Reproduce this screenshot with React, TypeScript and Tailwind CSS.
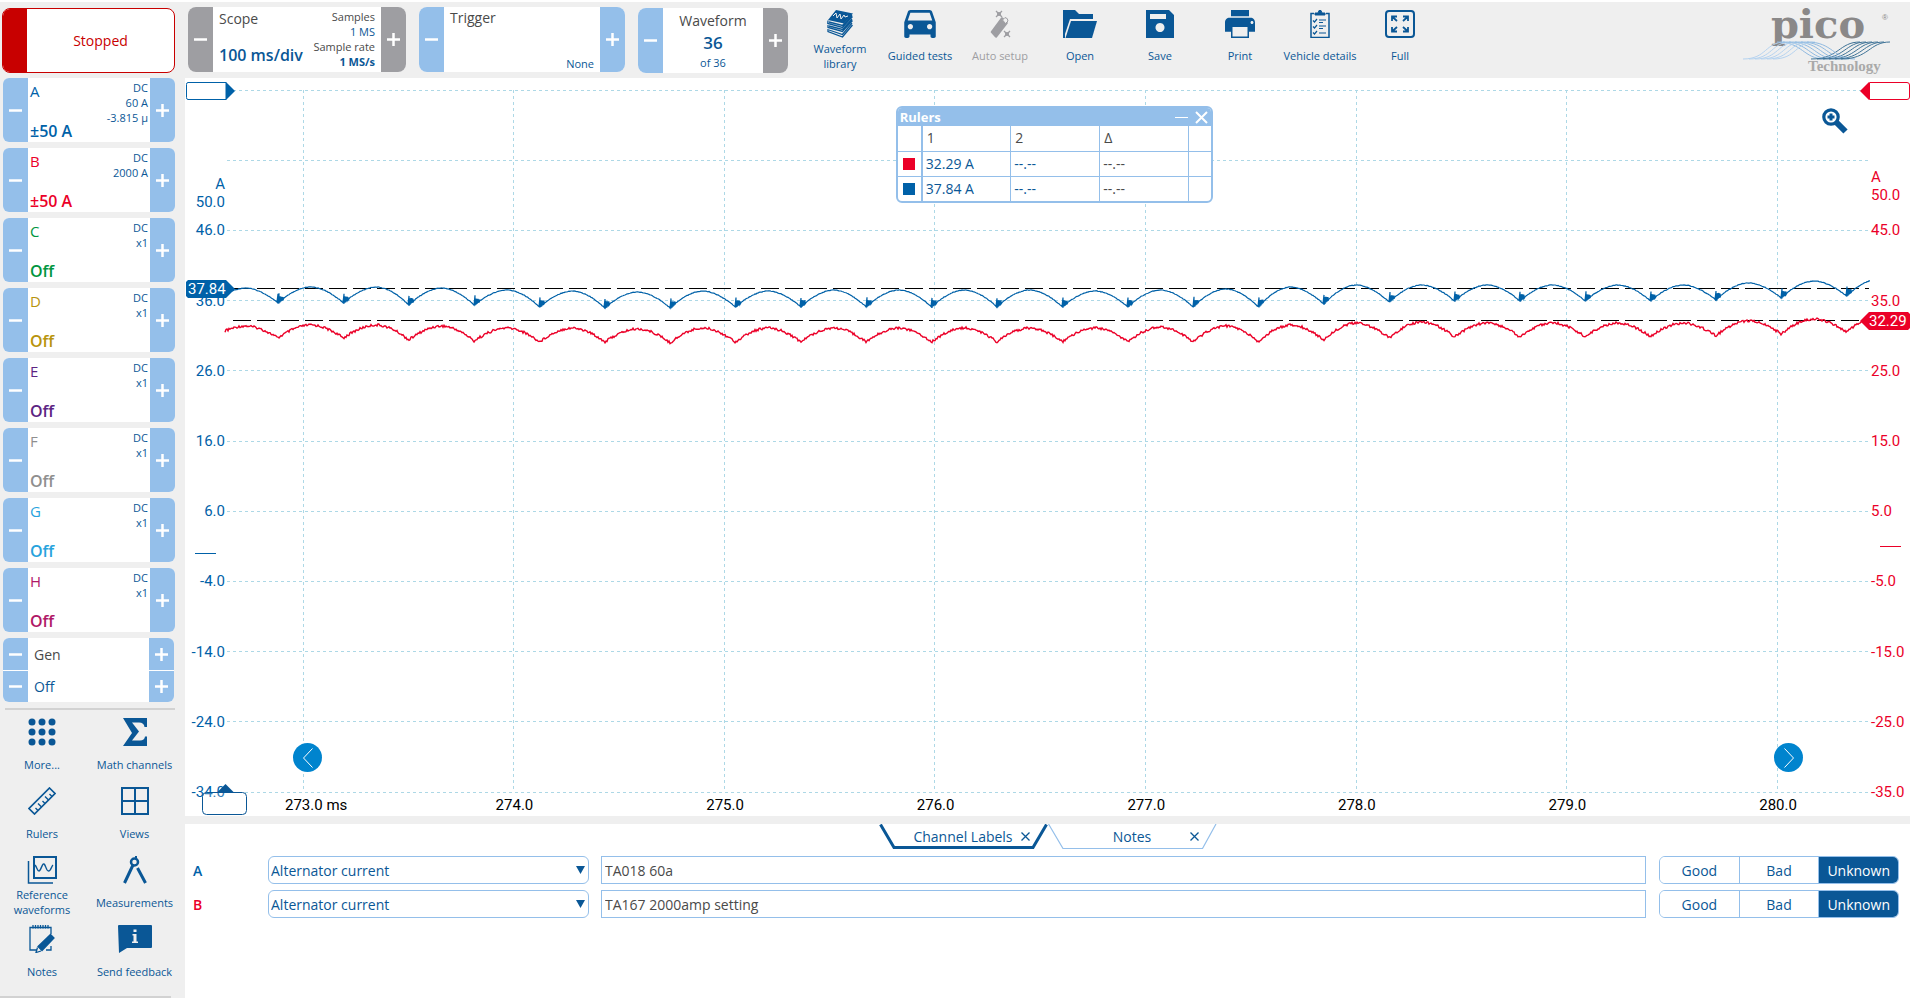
import type { ReactNode } from 'react';
import { useState } from 'react';
import clsx from 'clsx';

interface Channel {
  id: string;
  color: string;
  range: string;
  info: string[];
}

interface Tool {
  label: string;
  icon: ReactNode;
  disabled?: boolean;
}

const channels: Channel[] = [
  { id: 'A', color: 'text-[#0061a8]', range: '±50 A', info: ['DC', '60 A', '-3.815 µ'] },
  { id: 'B', color: 'text-[#eb0028]', range: '±50 A', info: ['DC', '2000 A'] },
  { id: 'C', color: 'text-[#009640]', range: 'Off', info: ['DC', 'x1'] },
  { id: 'D', color: 'text-[#b8940c]', range: 'Off', info: ['DC', 'x1'] },
  { id: 'E', color: 'text-[#5c2483]', range: 'Off', info: ['DC', 'x1'] },
  { id: 'F', color: 'text-[#8f8f8f]', range: 'Off', info: ['DC', 'x1'] },
  { id: 'G', color: 'text-[#27a3dd]', range: 'Off', info: ['DC', 'x1'] },
  { id: 'H', color: 'text-[#b01867]', range: 'Off', info: ['DC', 'x1'] },
];

const BLUE = '#0061a8';
const RED = '#eb0028';
const NAVY = '#0a5796';

/* ---------- icons ---------- */

const LibraryIcon = () => (
  <svg className="h-7 w-[26px]" viewBox="0 0 26 28" fill="none" stroke={NAVY} strokeWidth="1.3">
    <path d="M9 0 26 3.500 17 13.500 1 10z" fill={NAVY} stroke="none" />
    <path d="M6 6l3-3 1 5 3-4 1 5 3-4 1 2 3-1" stroke="#efefef" strokeWidth="1" />
    <path d="M1 10.500 0.800 13.500 15.500 17.500 25.500 6.500M2 12l13.500 3.500L25 5" />
    <path d="M1 15v2.500l14.500 4L25.500 10.500M2 16l13.500 3.500L25 9" />
    <path d="M1 19v2.500l14.500 5.500L25.500 15M2 20l13.500 4.500L25 13" />
  </svg>
);

const CarIcon = () => (
  <svg className="h-7 w-8" viewBox="3 5 18 16" fill={NAVY}>
    <path d="M18.92 6.01C18.72 5.42 18.16 5 17.5 5h-11c-.66 0-1.21.42-1.42 1.01L3 12v8c0 .55.45 1 1 1h1c.55 0 1-.45 1-1v-1h12v1c0 .55.45 1 1 1h1c.55 0 1-.45 1-1v-8l-2.08-5.99zM6.500 16c-.83 0-1.500-.67-1.500-1.500S5.670 13 6.500 13s1.500.67 1.500 1.500S7.330 16 6.500 16zm11 0c-.83 0-1.500-.67-1.500-1.500s.67-1.500 1.500-1.500 1.500.67 1.500 1.500-.67 1.500-1.500 1.500zM5 11l1.500-4.500h11L19 11H5z" />
  </svg>
);

const WandIcon = () => (
  <svg className="h-7 w-6" viewBox="0 0 24 28" fill="none" stroke="#9e9ea2" strokeWidth="1.300">
    <path d="M14 8.500 4 22l4 4.500L18.500 13z" fill="#9e9ea2" stroke="#9e9ea2" strokeWidth="2.500" strokeLinejoin="round" />
    <path d="M14.500 10 17.500 13.500 20 11Q20 8 17 7.500z" fill="#efefef" strokeWidth="1" />
    <path d="M8 1l6 6M14 1 8 7M11 2v4M9 4h4M16 21l6 6M22 21l-6 6M19 22v4M17 24h4" />
  </svg>
);

const FolderIcon = () => (
  <svg className="h-7 w-[34px]" viewBox="0 0 34 28" fill={NAVY}>
    <path d="M0 0h12l4 4h14v5H7L2 24V28H0z" />
    <path d="M8 11h26l-5 17H2.500z" />
  </svg>
);

const SaveIcon = () => (
  <svg className="h-7 w-7" viewBox="0 0 28 28" fill={NAVY} fillRule="evenodd">
    <path d="M0 0h23l5 5v23H0zM4 4v5h16V4zM14 13a4.500 4.500 0 1 0 .01 0z" />
  </svg>
);

const PrintIcon = () => (
  <svg className="h-7 w-[30px]" viewBox="2 3 20 18" preserveAspectRatio="none" fill={NAVY}>
    <path d="M19 8H5c-1.660 0-3 1.340-3 3v6h4v4h12v-4h4v-6c0-1.660-1.340-3-3-3zm-2 12H7v-6h10v6zm3-8c-.55 0-1-.45-1-1s.45-1 1-1 1 .45 1 1-.45 1-1 1zM18 3H6v4h12V3z" />
  </svg>
);

const ClipboardIcon = () => (
  <svg className="h-7 w-5" viewBox="0 0 20 28" fill="none" stroke={NAVY} strokeWidth="1.500">
    <path d="M4 3.500H1v24h18v-24h-3" />
    <path d="M5 5V3h3l1-2.500h2L12 3h3v2z" fill={NAVY} strokeWidth="1" />
    <path d="M9 10h7M9 12.500h4M9 16h7M9 18.500h4M9 23h7" strokeWidth="1.200" />
    <path d="M3 10.500l1.500 1.500L7 9M3 16.500l1.500 1.500L7 15M3 22.500l1.500 1.500L7 21" strokeWidth="1.200" />
  </svg>
);

const FullIcon = () => (
  <svg className="h-7 w-[30px]" viewBox="0 0 30 28" fill="none" stroke={NAVY} strokeWidth="2">
    <rect x="1" y="1" width="28" height="26" rx="3" />
    <path d="M7 11V6.500h5M7 6.500l5 4.500M18 6.500h5V11M23 6.500 18 11M7 17v4.500h5M7 21.500 12 17M18 21.500h5V17M23 21.500 18 17" strokeWidth="1.800" />
  </svg>
);

const MoreIcon = () => (
  <svg className="h-7 w-7" viewBox="0 0 28 28" fill={NAVY}>
    {[4, 14, 24].map((y) => [4, 14, 24].map((x) => <circle key={`${x}-${y}`} cx={x} cy={y} r="3.500" />))}
  </svg>
);

const SigmaIcon = () => (
  <svg className="h-7 w-6" viewBox="0 0 24 28" fill={NAVY}>
    <path d="M0 0h24v9h-2.500Q21 4.500 16 4.500H9l7 9L9 22.500h8Q21.500 22.500 22 18.500h2V28H0l9-13z" />
  </svg>
);

const RulerIcon = () => (
  <svg className="h-7 w-7" viewBox="0 0 28 28" fill="none" stroke={NAVY} strokeWidth="1.700">
    <path d="M21.500 1 27 6.500 6.500 27 1 21.500z" />
    <path d="M24 9.500 21.500 7M20.500 13 17 9.500M17 16.500 14.500 14M13.500 20 10 16.500M10 23.500 7.500 21" strokeWidth="1.400" />
  </svg>
);

const ViewsIcon = () => (
  <svg className="h-7 w-7" viewBox="0 0 28 28" fill="none" stroke={NAVY} strokeWidth="2">
    <path d="M1 1h26v26H1zM14 1v26M1 14h26" />
  </svg>
);

const ReferenceIcon = () => (
  <svg className="h-7 w-[30px]" viewBox="0 0 30 28" fill="none" stroke={NAVY} strokeWidth="2">
    <path d="M7 1h22v21H7z" />
    <path d="M1.500 5v22H26" strokeWidth="1.500" />
    <path d="M8 9c2 2 2 6 4 6s3-8 5-7 2 7 4.500 7 3-5 4.500-6" strokeWidth="1.400" />
  </svg>
);

const MeasureIcon = () => (
  <svg className="h-7 w-6" viewBox="0 0 24 28" fill="none" stroke={NAVY} strokeWidth="2.500">
    <circle cx="11.500" cy="6" r="3.500" />
    <path d="M13 0v3" strokeWidth="2" />
    <path d="M10 9 1.500 27M14.500 12 22.500 27" strokeWidth="3" />
  </svg>
);

const NotesIcon = () => (
  <svg className="h-7 w-7" viewBox="0 0 28 28" fill="none" stroke={NAVY} strokeWidth="1.300">
    <path d="M9 25H2V2.500h21V9M23 21v4h-5" />
    <path d="M5 0v3.500M7.500 0v3.500M10 0v3.500M12.500 0v3.500M15 0v3.500M17.500 0v3.500M20 0v3.500" />
    <path d="M22.500 9.500 26 13 14 25.500 10 21.500z" fill={NAVY} />
    <path d="M9.500 22.500 8 27.500l5-1.500" />
  </svg>
);

const FeedbackIcon = () => (
  <svg className="h-7 w-[34px]" viewBox="0 0 34 28" fill={NAVY}>
    <path d="M0 1Q0 0 1 0h32q1 0 1 1v21q0 1-1 1H9L1 28z" />
    <path d="M15.500 4.500h3v2.500h-3zM14.500 9h4v7.500h1.500V18h-6v-1.500h1.500v-6h-1z" fill="#efefef" />
  </svg>
);

const toolbar: Tool[] = [
  { label: 'Waveform library', icon: <LibraryIcon /> },
  { label: 'Guided tests', icon: <CarIcon /> },
  { label: 'Auto setup', icon: <WandIcon />, disabled: true },
  { label: 'Open', icon: <FolderIcon /> },
  { label: 'Save', icon: <SaveIcon /> },
  { label: 'Print', icon: <PrintIcon /> },
  { label: 'Vehicle details', icon: <ClipboardIcon /> },
  { label: 'Full', icon: <FullIcon /> },
];

const sideTools: Tool[] = [
  { label: 'More...', icon: <MoreIcon /> },
  { label: 'Math channels', icon: <SigmaIcon /> },
  { label: 'Rulers', icon: <RulerIcon /> },
  { label: 'Views', icon: <ViewsIcon /> },
  { label: 'Reference waveforms', icon: <ReferenceIcon /> },
  { label: 'Measurements', icon: <MeasureIcon /> },
  { label: 'Notes', icon: <NotesIcon /> },
  { label: 'Send feedback', icon: <FeedbackIcon /> },
];

/* ---------- small controls ---------- */

function StepButton({ kind, label, gray }: { kind: 'minus' | 'plus'; label: string; gray?: boolean }) {
  return (
    <button
      type="button"
      aria-label={label}
      className={clsx('flex w-[25px] shrink-0 items-center justify-center', gray ? 'bg-[#9e9ea2]' : 'bg-[#94bfea]')}
    >
      <svg className="h-[13px] w-[13px]" viewBox="0 0 13 13" stroke="#fff" strokeWidth="2.500">
        <path d={kind === 'plus' ? 'M0 6.500h13M6.500 0v13' : 'M0 6.500h13'} />
      </svg>
    </button>
  );
}

function ChannelCard({ channel }: { channel: Channel }) {
  return (
    <div className="flex h-16 w-[172px] overflow-hidden rounded-md bg-white">
      <StepButton kind="minus" label={`Channel ${channel.id} range down`} />
      <div className="flex flex-1 justify-between pl-[2px] pr-[2px]">
        <div className={clsx('flex flex-col justify-between', channel.color)}>
          <span className="text-[15px] leading-[26px]">{channel.id}</span>
          <span className="text-[16px] font-semibold leading-[22px]">{channel.range}</span>
        </div>
        <div className="pt-[2px] text-right text-[11px] leading-[15px] text-[#0a5796]">
          {channel.info.map((line) => (
            <div key={line}>{line}</div>
          ))}
        </div>
      </div>
      <StepButton kind="plus" label={`Channel ${channel.id} range up`} />
    </div>
  );
}

function Logo() {
  return (
    <svg className="h-[72px] w-[160px] overflow-visible" viewBox="0 0 160 72" role="img" aria-label="pico Technology">
      <text x="78" y="36" textAnchor="middle" fill="#8a8888" fontSize="40" fontFamily="DejaVu Serif, serif" fontWeight="bold">
        pico
      </text>
      <text x="142" y="18" fill="#8a8888" fontSize="8" fontFamily="Liberation Sans, sans-serif">
        ®
      </text>
      <g fill="none" strokeWidth="1">
        {[0, 6, 12, 18, 24, 30].map((o) => (
          <g key={o}>
            <path d={`M${o + 3} 57C${o + 27} 57 ${o + 25} 40 ${o + 45} 40`} stroke="#b5d3ef" />
            <path d={`M${o + 37} 40C${o + 63} 40 ${o + 63} 57 ${o + 85} 57`} stroke="#8fb9e0" />
            <path d={`M${o + 71} 57C${o + 99} 57 ${o + 99} 40 ${o + 120} 40`} stroke="#3f7397" />
          </g>
        ))}
      </g>
      <text x="68" y="69" fill="#a9a9a9" fontSize="15" fontFamily="Liberation Serif, serif" fontWeight="bold">
        Technology
      </text>
    </svg>
  );
}

/* ---------- scope view ---------- */

// The trace layer is drawn in a 1642 x 702 space and stretched to the plot.
const VIEW_W = 1642;
const VIEW_H = 702;
const RIPPLE = 65.36;
const FIRST_DIP = 51;

const blueDips = [213, 213, 215, 215, 217, 218, 218, 217, 217, 217, 217, 217, 217, 217, 217, 217, 214, 212, 211, 211, 211, 211, 210, 208, 206, 204];
const bluePeaks = [198, 197, 197, 198, 200, 201, 202, 201, 201, 200, 200, 200, 200, 201, 200, 199, 197, 195, 195, 195, 195, 195, 195, 193, 191, 189];
const redDips = [248, 248, 250, 251, 252, 252, 253, 252, 252, 252, 252, 252, 252, 252, 252, 252, 250, 248, 247, 247, 247, 247, 246, 244, 242, 240];
const redPeaks = [236, 235, 235, 236, 238, 238, 239, 238, 238, 238, 238, 238, 238, 238, 237, 236, 235, 233, 232, 233, 233, 233, 233, 231, 229, 227];

function noise(n: number) {
  const s = Math.sin(n * 12.9898) * 43758.5453;
  return s - Math.floor(s) - 0.5;
}

function buildTrace(dips: number[], peaks: number[], startX: number, jitter: number, burst: boolean) {
  const points: string[] = [];
  for (let x = startX; x <= VIEW_W + 1; x += 1) {
    const pos = (x - FIRST_DIP) / RIPPLE + 1;
    const i = Math.max(0, Math.min(peaks.length - 1, Math.floor(pos)));
    const t = pos - i;
    const left = dips[Math.max(0, i - 1)];
    const right = dips[Math.min(i, dips.length - 1)];
    const base = left + (right - left) * t;
    const y = base + (peaks[i] - base) * (1 - Math.pow(Math.abs(2 * t - 1), 1.8)) + noise(x) * jitter;
    const after = t * RIPPLE;
    if (burst && i > 0 && after < 5) {
      // commutation spike right after each dip
      const size = after < 1 ? 9 : 7 - after;
      points.push(`${x} ${(y - size).toFixed(1)}`, `${x} ${(y + 1).toFixed(1)}`);
    } else {
      points.push(`${x} ${y.toFixed(1)}`);
    }
  }
  return `M${points.join('L')}`;
}

const blueTrace = buildTrace(blueDips, bluePeaks, 4, 0.6, true);
const redTrace = buildTrace(redDips, redPeaks, -2, 2.4, false);

const xPct = (x: number) => `${(x / VIEW_W) * 100}%`;
const yPct = (y: number) => `${(y / VIEW_H) * 100}%`;

const timeLabels = ['273.0 ms', '274.0', '275.0', '276.0', '277.0', '278.0', '279.0', '280.0'];
const timeX = timeLabels.map((_, i) => 76 + i * 210.6);

const leftLabels: [number, string][] = [
  [94, 'A'], [112, '50.0'], [140, '46.0'], [211, '36.0'], [281, '26.0'], [351, '16.0'],
  [421, '6.0'], [491, '-4.0'], [562, '-14.0'], [632, '-24.0'], [702, '-34.0'],
];

const rightLabels: [number, string][] = [
  [87, 'A'], [105, '50.0'], [140, '45.0'], [211, '35.0'], [281, '25.0'], [351, '15.0'],
  [421, '5.0'], [491, '-5.0'], [562, '-15.0'], [632, '-25.0'], [702, '-35.0'],
];

function ScopeView() {
  return (
    <div className="grid flex-1 grid-cols-[42px_minmax(0,1fr)_41px] grid-rows-[minmax(0,1fr)_24px] pt-3 font-['Roboto',sans-serif] text-[15px]">
      <svg className="relative z-10 h-full w-full overflow-visible">
        {leftLabels.map(([y, label]) => (
          <svg key={label} y={yPct(y)} className="overflow-visible">
            <text x="40" y="5" textAnchor="end" fill={BLUE}>{label}</text>
          </svg>
        ))}
        <line x1="10" x2="31" y1={yPct(463)} y2={yPct(463)} stroke={BLUE} shapeRendering="crispEdges" />
        <svg y="0" className="overflow-visible">
          <path d="M3 -7.500H41V9.500H3Q1.500 9.500 1.500 7.500V-5.500Q1.500 -7.500 3 -7.500z" fill="#fff" stroke={BLUE} />
          <path d="M41 -8 50 1 41 10z" fill={BLUE} />
        </svg>
        <svg y={yPct(199)} className="overflow-visible">
          <path d="M3 -9H41L50 0 41 9H3L1 7V-7z" fill={BLUE} />
          <text x="3" y="5" fill="#fff">37.84</text>
        </svg>
        <svg y="100%" className="overflow-visible">
          <rect x="17.500" y="0.500" width="44" height="22" rx="4" fill="#fff" fillOpacity="0.200" stroke={NAVY} />
          <path d="M32 0.500 40.500 -8 49 0.500z" fill={NAVY} />
        </svg>
      </svg>

      <svg className="h-full w-full overflow-visible">
        <g stroke="#add8e6" strokeDasharray="3 3" shapeRendering="crispEdges">
          {Array.from({ length: 11 }, (_, i) => (
            <line key={i} x1="0" x2="100%" y1={`${i * 10}%`} y2={`${i * 10}%`} />
          ))}
          {timeX.map((x) => (
            <line key={x} x1={xPct(x)} x2={xPct(x)} y1="0" y2="100%" />
          ))}
        </g>
        <g stroke="#000" strokeDasharray="18 6" shapeRendering="crispEdges">
          <line x1="6" x2="100%" y1={yPct(198)} y2={yPct(198)} />
          <line x1="6" x2="100%" y1={yPct(230)} y2={yPct(230)} />
        </g>
        <svg width="100%" height="100%" viewBox={`0 0 ${VIEW_W} ${VIEW_H}`} preserveAspectRatio="none" className="overflow-visible">
          <path d={blueTrace} fill="none" stroke={BLUE} strokeWidth="1.200" vectorEffect="non-scaling-stroke" />
          <path d={redTrace} fill="none" stroke={RED} strokeWidth="1.400" vectorEffect="non-scaling-stroke" />
        </svg>
      </svg>

      <svg className="h-full w-full overflow-visible">
        {rightLabels.map(([y, label]) => (
          <svg key={label} y={yPct(y)} className="overflow-visible">
            <text x="2" y="5" fill={RED}>{label}</text>
          </svg>
        ))}
        <line x1="11" x2="32" y1={yPct(456)} y2={yPct(456)} stroke={RED} shapeRendering="crispEdges" />
        <svg y="0" className="overflow-visible">
          <path d="M0.500 -7.500H38Q40.500 -7.500 40.500 -5V7Q40.500 9.500 38 9.500H0.500z" fill="#fff" stroke={RED} />
          <path d="M0 -8 -9 1 0 10z" fill={RED} />
        </svg>
        <svg y={yPct(231)} className="overflow-visible">
          <path d="M0 -9H39L41 -7V7L39 9H0L-9 0z" fill={RED} />
          <text x="0" y="5" fill="#fff">32.29</text>
        </svg>
      </svg>

      <svg className="col-start-2 h-full w-full overflow-visible">
        {timeLabels.map((label, i) => (
          <svg key={label} x={xPct(timeX[i])} className="overflow-visible">
            <text x="-18" y="18" fill="#000">{label}</text>
          </svg>
        ))}
      </svg>
    </div>
  );
}

const rulerRows = [
  { swatch: 'bg-[#eb0028]', name: 'Channel B', value: '32.29 A' },
  { swatch: 'bg-[#0061a8]', name: 'Channel A', value: '37.84 A' },
];

function RulersPanel() {
  return (
    <div className="absolute left-[41.2%] top-7 z-20 w-[317px] overflow-hidden rounded-md border-2 border-[#94bfea] bg-white text-[14px]">
      <div className="flex h-[18px] items-center bg-[#94bfea] pl-[2px] text-white">
        <h2 className="flex-1 text-[13px] font-bold leading-4">Rulers</h2>
        <button type="button" aria-label="Minimise" className="mr-[7px]">
          <svg className="h-3 w-[13px]" viewBox="0 0 13 12" stroke="#fff"><path d="M0 6.500h13" /></svg>
        </button>
        <button type="button" aria-label="Close" className="mr-[3px]">
          <svg className="h-[13px] w-[13px]" viewBox="0 0 13 13" stroke="#fff" strokeWidth="2"><path d="M1 1l11 11M12 1 1 12" /></svg>
        </button>
      </div>
      <table className="w-full table-fixed border-collapse leading-5">
        <thead>
          <tr className="h-[25px] text-left text-[#4a4a4a]">
            <th className="w-6 border-r-2 border-[#94bfea]" aria-label="Channel"></th>
            <th className="w-[89px] border-r border-[#94bfea] pl-1 font-normal">1</th>
            <th className="w-[89px] border-r border-[#94bfea] pl-1 font-normal">2</th>
            <th className="w-[89px] border-r border-[#94bfea] pl-1 font-normal">Δ</th>
            <th aria-label="Lock"></th>
          </tr>
        </thead>
        <tbody>
          {rulerRows.map((row) => (
            <tr key={row.name} className="h-[25px] border-t border-[#94bfea] text-[#0a5796]">
              <td className="border-r-2 border-[#94bfea] pl-[5px]">
                <span title={row.name} className={clsx('block h-3 w-3', row.swatch)} />
              </td>
              <td className="border-r border-[#94bfea] pl-[3px]">{row.value}</td>
              <td className="border-r border-[#94bfea] pl-[3px]">--.--</td>
              <td className="border-r border-[#94bfea] pl-[3px] text-[#4a4a4a]">--.--</td>
              <td></td>
            </tr>
          ))}
        </tbody>
      </table>
    </div>
  );
}

function NavButton({ direction, className }: { direction: 'left' | 'right'; className: string }) {
  return (
    <button
      type="button"
      aria-label={direction === 'left' ? 'Previous' : 'Next'}
      className={clsx('absolute bottom-11 z-20 flex h-[29px] w-[29px] items-center justify-center rounded-full bg-[#0084ce]', className)}
    >
      <svg className="h-5 w-[10px]" viewBox="0 0 10 20" fill="none" stroke="#fff">
        <path d={direction === 'left' ? 'M9.500 0.500 0.500 10l9 9.500' : 'M0.500 0.500 9.500 10l-9 9.500'} />
      </svg>
    </button>
  );
}

/* ---------- channel labels panel ---------- */

const labelRows = [
  { id: 'A', color: 'text-[#0061a8]', type: 'Alternator current', note: 'TA018 60a' },
  { id: 'B', color: 'text-[#eb0028]', type: 'Alternator current', note: 'TA167 2000amp setting' },
];

const ratings = ['Good', 'Bad', 'Unknown'];

function PanelTab({ label, active }: { label: string; active?: boolean }) {
  return (
    <div className="relative flex h-[25px] w-[169px] items-center">
      <svg className="absolute inset-0 h-full w-full" viewBox="0 0 169 25" fill="none">
        <path
          d={active ? 'M1.500 0.500 15 23.500H154L167.500 0.500' : 'M0.500 0 15 24.500H154.500L168 0'}
          stroke={active ? NAVY : '#94bfea'}
          strokeWidth={active ? 3 : 1.2}
        />
      </svg>
      <button type="button" role="tab" aria-selected={!!active} className="relative flex-1 pl-[34px] text-center text-[14px] leading-5">
        {label}
      </button>
      <button type="button" aria-label={`Close ${label}`} className="relative ml-[7px] mr-[18px]">
        <svg className="h-[9px] w-[9px]" viewBox="0 0 9 9" stroke={NAVY} strokeWidth="1.300"><path d="M0.500 0.500l8 8M8.500 0.500l-8 8" /></svg>
      </button>
    </div>
  );
}

function LabelRow({ row }: { row: (typeof labelRows)[number] }) {
  const [rating, setRating] = useState('Unknown');
  const [note, setNote] = useState(row.note);

  return (
    <div className="flex h-7 items-center text-[14px]">
      <span className={clsx('w-[75px] font-semibold', row.color)}>{row.id}</span>
      <div className="relative mr-3 h-full w-[321px]">
        <select
          aria-label={`Channel ${row.id} type`}
          className="h-full w-full appearance-none rounded-md border border-[#94bfea] bg-white px-[2px] text-[#0a5796]"
        >
          <option>{row.type}</option>
        </select>
        <svg className="pointer-events-none absolute right-1 top-[10px] h-2 w-[9px]" viewBox="0 0 9 8" fill={NAVY}><path d="M0 0h9L4.500 8z" /></svg>
      </div>
      <input
        aria-label={`Channel ${row.id} label`}
        value={note}
        onChange={(e) => setNote(e.target.value)}
        className="mr-[13px] h-full min-w-0 flex-1 border border-[#94bfea] bg-white px-[3px] text-[#4a4a4a]"
      />
      <div className="flex h-full w-60 overflow-hidden rounded-md border border-[#94bfea]">
        {ratings.map((item) => (
          <button
            key={item}
            type="button"
            onClick={() => setRating(item)}
            className={clsx(
              'flex-1 basis-0 border-r border-[#94bfea] last:border-r-0',
              rating === item ? 'bg-[#0a5796] font-medium text-white' : 'bg-white text-[#0a5796]'
            )}
          >
            {item}
          </button>
        ))}
      </div>
    </div>
  );
}

export default function App() {
  return (
    <div className="flex min-h-screen w-full border-t-2 border-white bg-[#efefef] font-['Open_Sans','Noto_Sans',sans-serif] text-[#0a5796]">
      <aside className="flex w-[185px] shrink-0 flex-col">
        <button
          type="button"
          className="ml-[2px] mt-[6px] flex h-[65px] w-[173px] overflow-hidden rounded-lg border border-[#c80000] bg-white text-[14px] text-[#c80000]"
        >
          <span className="h-full w-6 bg-[#c80000]" />
          <span className="flex-1 self-center">Stopped</span>
        </button>

        <div className="ml-[3px] mt-[5px] flex flex-col gap-[6px]">
          {channels.map((channel) => (
            <ChannelCard key={channel.id} channel={channel} />
          ))}
          <div className="flex w-[171px] flex-col gap-px overflow-hidden rounded-md bg-white text-[14px]">
            <div className="flex h-8">
              <StepButton kind="minus" label="Generator down" />
              <span className="flex-1 self-center pl-[6px] text-[#4a4a4a]">Gen</span>
              <StepButton kind="plus" label="Generator up" />
            </div>
            <div className="flex h-[31px]">
              <StepButton kind="minus" label="Generator output down" />
              <span className="flex-1 self-center pl-[6px]">Off</span>
              <StepButton kind="plus" label="Generator output up" />
            </div>
          </div>
        </div>

        <hr className="ml-[5px] mt-[6px] w-[170px] border-t-2 border-[#d2d2d2]" />

        <div className="mt-2 grid grid-cols-[84px_101px]">
          {sideTools.map((tool) => (
            <button key={tool.label} type="button" className="flex h-[69px] flex-col items-center text-[11px] leading-[15px]">
              {tool.icon}
              <span className="flex h-[36px] items-center whitespace-pre-line text-center">
                {tool.label.startsWith('Reference') ? tool.label.replace(' ', '\n') : tool.label}
              </span>
            </button>
          ))}
        </div>
        <hr className="mt-auto w-[171px] border-t-2 border-[#d2d2d2]" />
      </aside>

      <main className="flex min-w-0 flex-1 flex-col">
        <header className="flex h-[76px] items-start pt-[5px]">
          <div className="ml-[3px] flex h-[65px] w-[218px] overflow-hidden rounded-lg bg-white">
            <StepButton gray kind="minus" label="Timebase down" />
            <div className="flex flex-1 justify-between whitespace-nowrap pl-[6px] pr-[6px]">
              <div className="flex flex-col justify-between pb-1">
                <span className="text-[14px] leading-[24px] text-[#4a4a4a]">Scope</span>
                <span className="text-[16px] font-semibold leading-[26px]">100 ms/div</span>
              </div>
              <div className="-ml-3 pt-[2px] text-right text-[11px] leading-[15px]">
                <div className="text-[#4a4a4a]">Samples</div>
                <div>1 MS</div>
                <div className="text-[#4a4a4a]">Sample rate</div>
                <div className="font-bold">1 MS/s</div>
              </div>
            </div>
            <StepButton gray kind="plus" label="Timebase up" />
          </div>

          <div className="ml-[13px] flex h-[65px] w-[206px] overflow-hidden rounded-lg bg-white">
            <StepButton kind="minus" label="Trigger down" />
            <div className="flex flex-1 flex-col justify-between px-[6px]">
              <span className="text-[14px] leading-[22px] text-[#4a4a4a]">Trigger</span>
              <span className="text-right text-[11px] leading-4">None</span>
            </div>
            <StepButton kind="plus" label="Trigger up" />
          </div>

          <div className="ml-[13px] mt-px flex h-[65px] w-[150px] overflow-hidden rounded-lg bg-white">
            <StepButton kind="minus" label="Previous waveform" />
            <div className="flex flex-1 flex-col items-center pt-[2px]">
              <span className="text-[14px] leading-[22px] text-[#4a4a4a]">Waveform</span>
              <span className="text-[17px] font-semibold leading-[22px]">36</span>
              <span className="text-[11px] leading-[18px]">of 36</span>
            </div>
            <StepButton gray kind="plus" label="Next waveform" />
          </div>

          <nav className="ml-3 flex pt-[3px]">
            {toolbar.map((tool) => (
              <button
                key={tool.label}
                type="button"
                disabled={tool.disabled}
                className={clsx('flex w-20 flex-col items-center text-[11px] leading-[15px]', tool.disabled && 'text-[#9e9ea2]')}
              >
                {tool.icon}
                <span className="flex h-[35px] items-center whitespace-pre-line text-center">
                  {tool.label.startsWith('Waveform') ? tool.label.replace(' ', '\n') : tool.label}
                </span>
              </button>
            ))}
          </nav>

          <div className="-mt-[5px] ml-auto mr-[10px]">
            <Logo />
          </div>
        </header>

        <section aria-label="Scope view" className="relative flex flex-1 flex-col bg-white">
          <ScopeView />
          <RulersPanel />
          <button type="button" aria-label="Zoom" className="absolute right-[62px] top-[30px] z-20">
            <svg className="h-[26px] w-[26px]" viewBox="0 0 26 26" fill="none" stroke={NAVY}>
              <circle cx="9" cy="9" r="7.200" strokeWidth="3.200" />
              <path d="M9 5.500v7M5.500 9h7" strokeWidth="3" />
              <path d="M14 14l9.500 9.500" strokeWidth="6" />
            </svg>
          </button>
          <NavButton direction="left" className="left-[108px]" />
          <NavButton direction="right" className="right-[107px]" />
        </section>

        <section aria-label="Channel labels" className="mt-2 h-[174px] bg-white">
          <div role="tablist" className="flex justify-center">
            <PanelTab label="Channel Labels" active />
            <PanelTab label="Notes" />
          </div>
          <div className="mt-[7px] flex flex-col gap-[6px] pl-2 pr-[11px]">
            {labelRows.map((row) => (
              <LabelRow key={row.id} row={row} />
            ))}
          </div>
        </section>
      </main>
    </div>
  );
}
